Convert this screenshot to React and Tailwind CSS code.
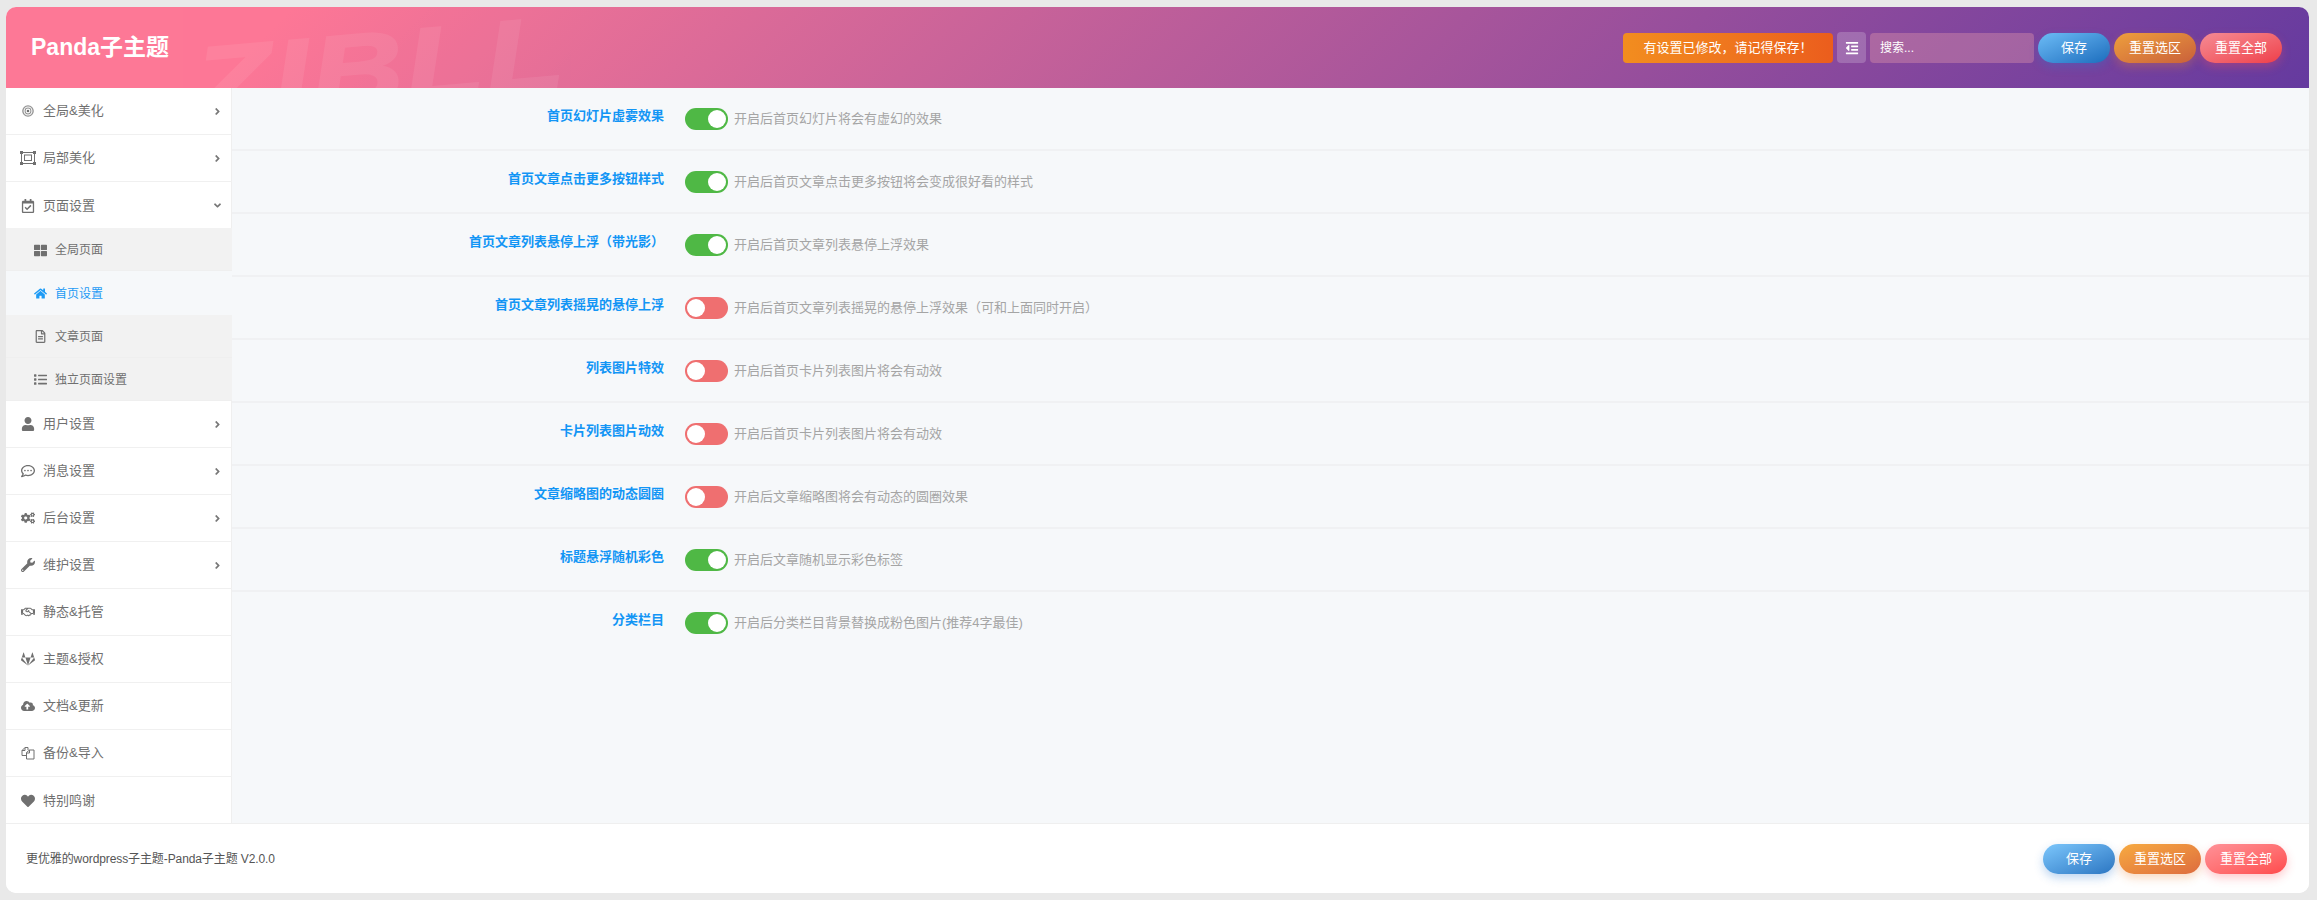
import {
  FaAngleDown,
  FaAngleRight,
  FaCloudUploadAlt,
  FaCogs,
  FaGitlab,
  FaHeart,
  FaHome,
  FaList,
  FaOutdent,
  FaRegCalendarCheck,
  FaRegCommentDots,
  FaRegFileAlt,
  FaRegHandshake,
  FaThLarge,
  FaUser,
  FaWrench,
} from "react-icons/fa";

function RingsIcon({ className }) {
  return (
    <svg viewBox="0 0 14 14" width="12" height="12" className={className} fill="none" stroke="currentColor">
      <circle cx="7" cy="7" r="6" strokeWidth="1.6" opacity="0.75" />
      <circle cx="7" cy="7" r="3.4" strokeWidth="1.2" opacity="0.75" />
      <circle cx="7" cy="7" r="1.5" fill="currentColor" stroke="none" />
    </svg>
  );
}

function HandlesIcon({ className }) {
  return (
    <svg viewBox="0 0 16 14" width="16" height="14" className={className} fill="none" stroke="currentColor">
      <rect x="1.5" y="1.5" width="13" height="11" strokeWidth="1" />
      <rect x="4.5" y="4" width="7" height="5.5" strokeWidth="1" />
      <rect x="0" y="0" width="3" height="3" fill="currentColor" stroke="none" />
      <rect x="13" y="0" width="3" height="3" fill="currentColor" stroke="none" />
      <rect x="0" y="11" width="3" height="3" fill="currentColor" stroke="none" />
      <rect x="13" y="11" width="3" height="3" fill="currentColor" stroke="none" />
    </svg>
  );
}

function FilesIcon({ className }) {
  return (
    <svg viewBox="0 0 14 14" width="14" height="14" className={className} fill="none" stroke="currentColor" strokeWidth="1">
      <path d="M5 9.5H1V4.5L4 1.5H7V4" />
      <path d="M4 1.5V4.5H1" />
      <path d="M5.5 13V6.5L8.5 4H13V13Z" />
      <path d="M8.5 4V7H5.5" />
    </svg>
  );
}

const topMenu = [
  { label: "全局&美化", icon: RingsIcon, arrow: true },
  { label: "局部美化", icon: HandlesIcon, arrow: true },
];

const subMenu = [
  { label: "全局页面", icon: FaThLarge },
  { label: "首页设置", icon: FaHome, active: true },
  { label: "文章页面", icon: FaRegFileAlt },
  { label: "独立页面设置", icon: FaList },
];

const restMenu = [
  { label: "用户设置", icon: FaUser, arrow: true },
  { label: "消息设置", icon: FaRegCommentDots, arrow: true },
  { label: "后台设置", icon: FaCogs, arrow: true },
  { label: "维护设置", icon: FaWrench, arrow: true },
  { label: "静态&托管", icon: FaRegHandshake },
  { label: "主题&授权", icon: FaGitlab },
  { label: "文档&更新", icon: FaCloudUploadAlt },
  { label: "备份&导入", icon: FilesIcon },
  { label: "特别鸣谢", icon: FaHeart, last: true },
];

const options = [
  { label: "首页幻灯片虚雾效果", desc: "开启后首页幻灯片将会有虚幻的效果", on: true },
  { label: "首页文章点击更多按钮样式", desc: "开启后首页文章点击更多按钮将会变成很好看的样式", on: true },
  { label: "首页文章列表悬停上浮（带光影）", desc: "开启后首页文章列表悬停上浮效果", on: true },
  { label: "首页文章列表摇晃的悬停上浮", desc: "开启后首页文章列表摇晃的悬停上浮效果（可和上面同时开启）", on: false },
  { label: "列表图片特效", desc: "开启后首页卡片列表图片将会有动效", on: false },
  { label: "卡片列表图片动效", desc: "开启后首页卡片列表图片将会有动效", on: false },
  { label: "文章缩略图的动态圆圈", desc: "开启后文章缩略图将会有动态的圆圈效果", on: false },
  { label: "标题悬浮随机彩色", desc: "开启后文章随机显示彩色标签", on: true },
  { label: "分类栏目", desc: "开启后分类栏目背景替换成粉色图片(推荐4字最佳)", on: true },
];

function MenuItem({ item, open }) {
  const Icon = item.icon;
  return (
    <div
      className={`flex h-[47px] items-center border-r border-r-[#efefef] bg-white pr-[8px] text-[13px] text-[#707070] ${
        item.last ? "" : "border-b border-b-[#f0f0f0]"
      }`}
    >
      <span className="flex w-[37px] shrink-0 justify-center pl-[7px]">
        <Icon className="text-[14px] text-[#707070]" />
      </span>
      <span className="flex-1">{item.label}</span>
      {open ? (
        <FaAngleDown className="text-[11px] text-[#777]" />
      ) : item.arrow ? (
        <FaAngleRight className="text-[11px] text-[#777]" />
      ) : null}
    </div>
  );
}

function SubItem({ item }) {
  const Icon = item.icon;
  return (
    <div
      className={`flex h-[43.25px] items-center pt-[2px] text-[12px] ${
        item.active ? "bg-[#f6f8fa] text-[#1e9bf5]" : "border-b border-b-[#efefef] bg-[#f2f2f2] text-[#707070]"
      }`}
    >
      <span className="flex w-[49px] shrink-0 justify-center pl-[20px]">
        <Icon className="text-[13px]" />
      </span>
      {item.label}
    </div>
  );
}

function Toggle({ on }) {
  return (
    <span
      className={`flex h-[22px] w-[43px] shrink-0 items-center rounded-full px-[2px] ${
        on ? "justify-end bg-[#4fb845]" : "justify-start bg-[#ef6f70]"
      }`}
    >
      <span className="h-[18px] w-[18px] rounded-full bg-white" />
    </span>
  );
}

function Buttons({ tone }) {
  const header = tone === "header";
  return (
    <div className="flex gap-1 text-[13px] text-white">
      <button
        className={`h-[30px] w-[72px] rounded-full bg-gradient-to-br shadow-[0_4px_10px_rgba(40,120,210,0.3)] ${
          header ? "from-[#6cbcf6] to-[#1a6dbd]" : "from-[#7cc7fc] to-[#2b76c2]"
        }`}
      >
        保存
      </button>
      <button
        className={`h-[30px] w-[82px] rounded-full bg-gradient-to-br shadow-[0_4px_10px_rgba(235,130,50,0.3)] ${
          header ? "from-[#ee9f3c] to-[#c9603a]" : "from-[#f7aa40] to-[#dd6c3e]"
        }`}
      >
        重置选区
      </button>
      <button
        className={`h-[30px] w-[82px] rounded-full bg-gradient-to-br shadow-[0_4px_10px_rgba(255,80,90,0.3)] ${
          header ? "from-[#f58a94] to-[#ee3c4a]" : "from-[#ff9198] to-[#ff494c]"
        }`}
      >
        重置全部
      </button>
    </div>
  );
}

export default function App() {
  return (
    <div className="h-[900px] w-full overflow-hidden bg-[#e9e9e9] pt-[7px] pr-2 pb-[7px] pl-[6px] font-['Liberation_Sans','Noto_Sans_CJK_SC',sans-serif]">
      <div className="flex h-[886px] flex-col overflow-hidden rounded-[10px] bg-white">
        <header className="relative flex h-[81px] shrink-0 items-center justify-between overflow-hidden bg-[linear-gradient(135deg,#fd7896_12%,#653a9f_100%)] pr-[27px] pl-[25px]">
          <span className="absolute top-[10px] left-[224px] scale-x-[1.25] -rotate-[5deg] text-[102px] leading-none font-black tracking-[2px] text-white italic opacity-[0.07] [-webkit-text-stroke:2px_white]">
            ZIBLL
          </span>
          <h1 className="relative text-[23px] font-bold text-white">Panda子主题</h1>
          <div className="relative flex items-center gap-1">
            <div className="flex h-[30px] w-[210px] items-center justify-center rounded bg-gradient-to-r from-[#f28d1f] to-[#eb5d1d] text-[13px] text-white">
              有设置已修改，请记得保存！
            </div>
            <button className="flex h-[31px] w-[29px] items-center justify-center rounded bg-white/20 text-[14px] text-white">
              <FaOutdent />
            </button>
            <input
              placeholder="搜索..."
              className="h-[30px] w-[164px] rounded bg-[#ffb0b0]/30 px-[10px] text-[12px] text-white outline-none placeholder:text-white"
            />
            <Buttons tone="header" />
          </div>
        </header>

        <div className="flex min-h-0 flex-1">
          <aside className="w-[226px] shrink-0">
            {topMenu.map((item) => (
              <MenuItem key={item.label} item={item} />
            ))}
            <div className="h-[46px] overflow-hidden">
              <MenuItem item={{ label: "页面设置", icon: FaRegCalendarCheck, last: true }} open />
            </div>
            {subMenu.map((item) => (
              <SubItem key={item.label} item={item} />
            ))}
            {restMenu.map((item) => (
              <MenuItem key={item.label} item={item} />
            ))}
          </aside>
          <main className="flex-1 bg-[#f6f8fa]">
            {options.map((opt, i) => (
              <div
                key={opt.label}
                className={`flex h-[63px] pt-5 ${i < options.length - 1 ? "border-b-2 border-b-[#f0f1f3]" : ""}`}
              >
                <label className="w-[432px] shrink-0 text-right text-[13px] leading-[16px] font-semibold text-[#1295f5]">
                  {opt.label}
                </label>
                <div className="ml-[21px] flex h-[22px] items-center gap-[6px]">
                  <Toggle on={opt.on} />
                  <span className="text-[13px] text-[#a5a5a5]">{opt.desc}</span>
                </div>
              </div>
            ))}
          </main>
        </div>

        <footer className="flex h-[70px] shrink-0 items-center justify-between border-t border-t-[#efefef] bg-white pr-[22px] pl-5">
          <p className="text-[12px] tracking-[-0.1px] text-[#555]">更优雅的wordpress子主题-Panda子主题 V2.0.0</p>
          <Buttons tone="footer" />
        </footer>
      </div>
    </div>
  );
}
